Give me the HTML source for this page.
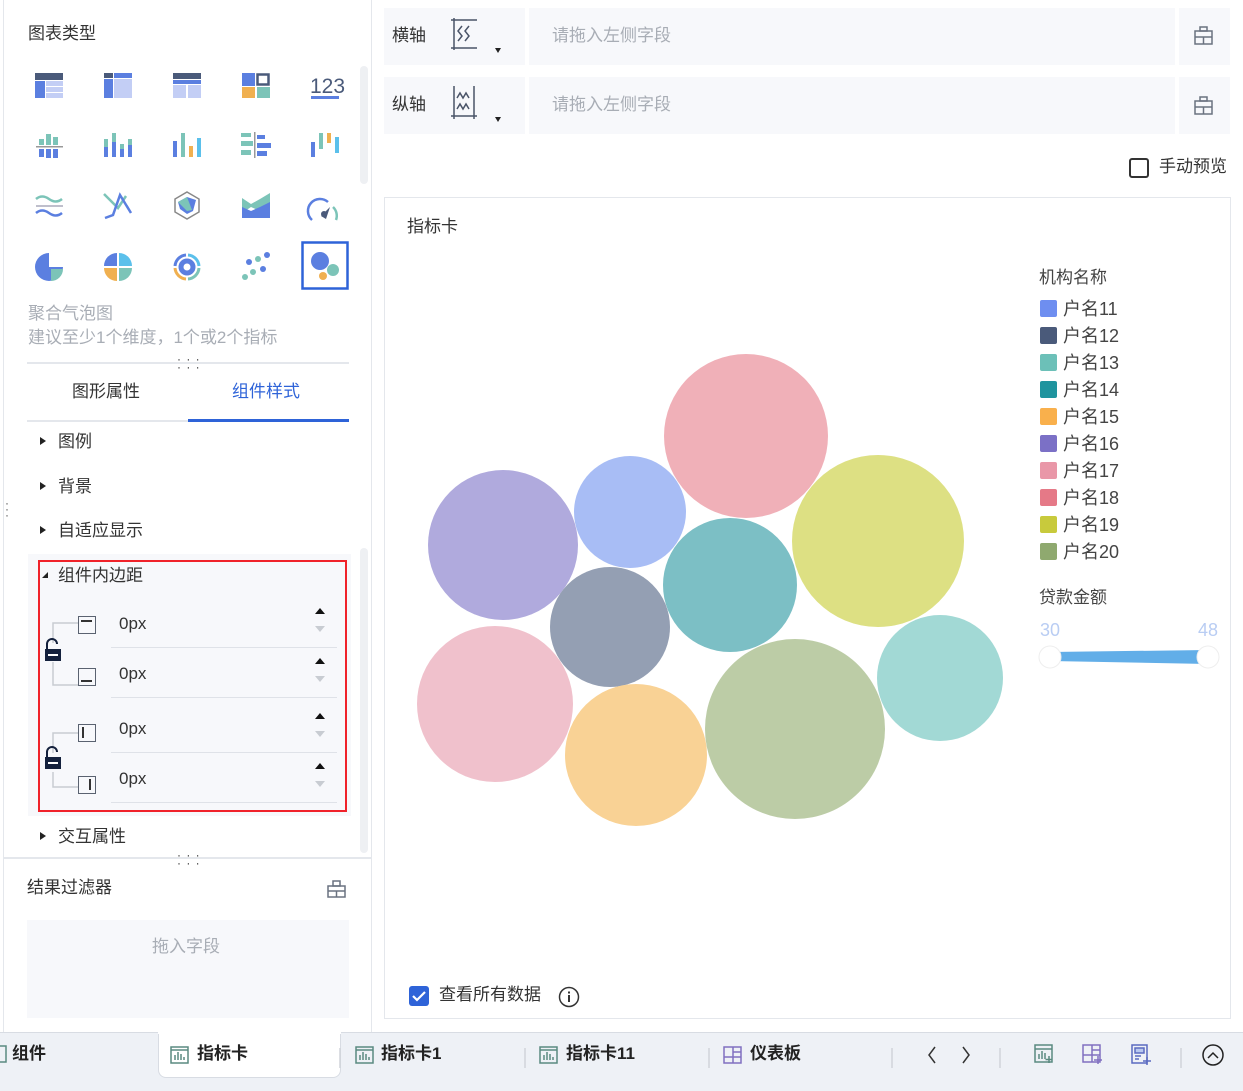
<!DOCTYPE html><html><head><meta charset="utf-8"><style>
*{margin:0;padding:0;box-sizing:border-box}
body{width:1243px;height:1091px;position:relative;background:#fff;font-family:"Liberation Sans","Noto Sans CJK SC",sans-serif;color:#333;overflow:hidden;font-size:17px;line-height:1.1}
.a{position:absolute}
.t{position:absolute;white-space:nowrap}
.gray{color:#a8adb5}
.sec{position:absolute;left:40px;font-size:17px;color:#333}
.sec:before{content:"";display:inline-block;border-left:6px solid #222;border-top:4px solid transparent;border-bottom:4px solid transparent;margin-right:12px;vertical-align:2px}
.leg{position:absolute;left:1040px;font-size:18px;color:#444}
.leg i{display:inline-block;width:17px;height:17px;vertical-align:-2px;margin-right:6px;border-radius:2px}
.inp{position:absolute;left:111px;width:226px;height:50px;border-bottom:1px solid #dfe2e8;font-size:17px;padding:17px 0 0 8px}
.up{position:absolute;right:12px;top:10px;border-bottom:6px solid #111;border-left:5px solid transparent;border-right:5px solid transparent}
.dn{position:absolute;right:12px;top:28px;border-top:6px solid #c8ccd2;border-left:5px solid transparent;border-right:5px solid transparent}
.pi{position:absolute;left:78px;width:18px;height:18px;border:1.5px solid #5a6270}
.tab{position:absolute;top:1045px;font-size:17px;font-weight:bold;color:#222}
</style></head><body>
<div class="a" style="left:3px;top:0;width:1px;height:1032px;background:#e4e7ec"></div>
<div class="a" style="left:371px;top:0;width:1px;height:1032px;background:#e4e7ec"></div>
<div class="a" style="left:360px;top:66px;width:8px;height:118px;background:#eef0f3;border-radius:4px"></div>
<div class="a" style="left:360px;top:548px;width:8px;height:305px;background:#eef0f3;border-radius:4px"></div>
<div class="t" style="left:28px;top:25px">图表类型</div>
<svg class="a" style="left:0;top:60px" width="360" height="240">
<g transform="translate(35,13)"><rect width="28" height="7" fill="#4a5a7a"/><rect y="8" width="10" height="17" fill="#5b7fe0"/><rect x="11" y="8" width="17" height="5" fill="#c3cef5"/><rect x="11" y="14" width="17" height="5" fill="#c3cef5"/><rect x="11" y="20" width="17" height="5" fill="#c3cef5"/></g>
<g transform="translate(104,13)"><rect width="9" height="5" fill="#4a5a7a"/><rect x="10" width="18" height="5" fill="#5b7fe0"/><rect y="6" width="9" height="19" fill="#5b7fe0"/><rect x="10" y="6" width="18" height="19" fill="#c3cef5"/></g>
<g transform="translate(173,13)"><rect width="28" height="6" fill="#4a5a7a"/><rect y="7" width="28" height="4" fill="#5b7fe0"/><rect y="12" width="13" height="13" fill="#c3cef5"/><rect x="15" y="12" width="13" height="13" fill="#c3cef5"/></g>
<g transform="translate(242,13)"><rect width="13" height="13" fill="#5b7fe0"/><rect x="15.5" y="1.5" width="11" height="10" fill="none" stroke="#4a5a7a" stroke-width="2.5"/><rect y="14" width="13" height="11" fill="#f0b050"/><rect x="15" y="14" width="13" height="11" fill="#7cc4b8"/></g>
<text x="310" y="33" font-size="21" fill="#4a5a7a" font-family="Liberation Sans">123</text><rect x="311" y="36" width="28" height="3" fill="#5b7fe0"/>
<g transform="translate(36,72)" ><rect x="3" y="7" width="5" height="6" fill="#7cc4b8"/><rect x="10" y="2" width="5" height="11" fill="#7cc4b8"/><rect x="17" y="5" width="5" height="8" fill="#7cc4b8"/><rect y="14" width="27" height="1.5" fill="#999"/><rect x="3" y="17" width="5" height="8" fill="#5b7fe0"/><rect x="10" y="17" width="5" height="9" fill="#5b7fe0"/><rect x="17" y="17" width="5" height="9" fill="#5b7fe0"/></g>
<g transform="translate(104,73)"><rect y="6" width="4" height="18" fill="#5b7fe0"/><rect y="6" width="4" height="8" fill="#7cc4b8"/><rect x="8" y="0" width="4" height="24" fill="#5b7fe0"/><rect x="8" width="4" height="9" fill="#7cc4b8"/><rect x="16" y="11" width="4" height="13" fill="#5b7fe0"/><rect x="16" y="11" width="4" height="5" fill="#7cc4b8"/><rect x="24" y="6" width="4" height="18" fill="#5b7fe0"/><rect x="24" y="6" width="4" height="6" fill="#7cc4b8"/></g>
<g transform="translate(173,73)"><rect y="8" width="4" height="16" fill="#5b7fe0"/><rect x="8" width="4" height="24" fill="#7cc4b8"/><rect x="16" y="13" width="4" height="11" fill="#f0b050"/><rect x="24" y="5" width="4" height="19" fill="#5bc0eb"/></g>
<g transform="translate(241,73)"><rect width="10" height="4" fill="#7cc4b8"/><rect y="8" width="12" height="5" fill="#7cc4b8"/><rect y="17" width="10" height="5" fill="#7cc4b8"/><rect x="13" y="-1" width="1.5" height="26" fill="#999"/><rect x="16" y="2" width="8" height="4" fill="#5b7fe0"/><rect x="16" y="10" width="14" height="5" fill="#5b7fe0"/><rect x="16" y="18" width="10" height="5" fill="#5b7fe0"/></g>
<g transform="translate(311,73)"><rect y="9" width="4" height="15" fill="#5b7fe0"/><rect x="8" width="4" height="16" fill="#7cc4b8"/><rect x="16" y="0" width="4" height="10" fill="#f0b050"/><rect x="24" y="4" width="4" height="16" fill="#5bc0eb"/></g>
<g fill="none" stroke-width="2.5"><path d="M36 139q6-5 13 0t13 0" stroke="#7cc4b8"/><path d="M36 146h27" stroke="#aab" stroke-width="1.5"/><path d="M36 153q6-5 13 0t13 0" stroke="#5b7fe0"/>
<path d="M104 134l14 14 8-12" stroke="#7cc4b8"/><path d="M105 158l8-3 7-20 11 18" stroke="#5b7fe0"/>
<path d="M187 132l12 7v13l-12 7-12-7v-13z" stroke="#888" stroke-width="1.5"/><path d="M178 142l9-5 9 3-3 11-6 3-7-5z" fill="#5b7fe0" stroke="none"/><path d="M178 142l9 9 5-1-5-13z" fill="#7cc4b8" stroke="none"/>
<path d="M312 160a12 12 0 0 1 16-18" stroke="#5b7fe0"/><path d="M333 147a12 12 0 0 1 3 13" stroke="#7cc4b8"/></g>
<path d="M242 138l9 6 9-5 10-6v10l-10 8-9-4-9 6z" fill="#7cc4b8"/><path d="M242 147l9 4 9-4 10-5v16h-28z" fill="#5b7fe0"/>
<path d="M321 156l9-9-4 12z" fill="#4a5a7a"/><circle cx="324" cy="154" r="3" fill="#4a5a7a"/>
<g transform="translate(35,193)"><path d="M14 0a14 14 0 1 0 14 14h-14z" fill="#5b7fe0"/><path d="M16 16h12a12 12 0 0 1-12 12z" fill="#7cc4b8"/></g>
<g transform="translate(104,193)"><path d="M13 0v13h-13a13 13 0 0 1 13-13z" fill="#5b7fe0"/><path d="M15 0a13 13 0 0 1 13 13h-13z" fill="#5bc0eb"/><path d="M0 15h13v13a13 13 0 0 1-13-13z" fill="#f0b050"/><path d="M15 15h13a13 13 0 0 1-13 13z" fill="#7cc4b8"/></g>
<g transform="translate(187,207)" fill="none" stroke-width="3"><path d="M-12 -1a12 12 0 0 1 11-11" stroke="#5b7fe0"/><path d="M1 -12a12 12 0 0 1 11 11" stroke="#5bc0eb"/><path d="M-12 1a12 12 0 0 0 11 11" stroke="#f0b050"/><path d="M1 12a12 12 0 0 0 11-11" stroke="#7cc4b8"/><circle r="6" stroke="#5b7fe0" stroke-width="5"/></g>
<circle cx="245" cy="217" r="3" fill="#7cc4b8"/><circle cx="253" cy="212" r="3" fill="#7cc4b8"/><circle cx="263" cy="209" r="3" fill="#5b7fe0"/><circle cx="249" cy="202" r="3" fill="#5b7fe0"/><circle cx="258" cy="199" r="3" fill="#7cc4b8"/><circle cx="267" cy="195" r="3" fill="#5b7fe0"/>
<rect x="302.5" y="182.5" width="45" height="46" fill="none" stroke="#2e63d8" stroke-width="2.5"/>
<circle cx="320" cy="201" r="9" fill="#5b7fe0"/><circle cx="333" cy="210" r="6" fill="#7cc4b8"/><circle cx="323" cy="216" r="4" fill="#f0b050"/>
</svg>
<div class="t gray" style="left:28px;top:305px">聚合气泡图</div>
<div class="t gray" style="left:28px;top:329px">建议至少1个维度，1个或2个指标</div>
<div class="a" style="left:27px;top:362px;width:322px;height:2px;background:#e4e7ec"></div>
<div class="t" style="left:177px;top:355px;font-size:12px;letter-spacing:1px;line-height:8px">· · ·<br>· · ·</div>
<div class="t" style="left:72px;top:383px">图形属性</div>
<div class="t" style="left:232px;top:383px;color:#2e63d8">组件样式</div>
<div class="a" style="left:27px;top:420px;width:161px;height:2px;background:#e4e7ec"></div>
<div class="a" style="left:188px;top:419px;width:161px;height:3px;background:#2e63d8"></div>
<div class="sec" style="top:433px">图例</div>
<div class="sec" style="top:478px">背景</div>
<div class="sec" style="top:522px">自适应显示</div>
<div class="t" style="left:5px;top:500px;font-size:12px;line-height:6px;color:#555">·<br>·<br>·</div>
<div class="a" style="left:28px;top:554px;width:323px;height:262px;background:#f7f8fb"></div>
<div class="a" style="left:38px;top:560px;width:309px;height:252px;border:2px solid #f0222a"></div>
<div class="t" style="left:42px;top:567px;font-size:17px"><span style="display:inline-block;border-bottom:6px solid #222;border-left:6px solid transparent;margin-right:10px;vertical-align:3px"></span>组件内边距</div>
<svg class="a" style="left:40px;top:600px" width="60" height="210" fill="none" stroke="#c8ccd2" stroke-width="1.5"><path d="M38 23H13v20M13 62v23h25"/><path d="M38 133H13v20M13 172v15h25"/><g fill="#14213d" stroke="none"><rect x="5" y="49" width="16" height="12"/><rect x="5" y="157" width="16" height="12"/></g><path d="M7 49v-5a5 5 0 0 1 10 0" stroke="#14213d" stroke-width="2"/><path d="M7 157v-5a5 5 0 0 1 10 0" stroke="#14213d" stroke-width="2"/><g stroke="#fff" stroke-width="2"><path d="M8 55h10M8 163h10"/></g></svg>
<div class="pi" style="top:616px"><div class="a" style="left:2px;top:3px;width:11px;height:1.5px;background:#333"></div></div>
<div class="pi" style="top:668px"><div class="a" style="left:2px;top:11px;width:11px;height:1.5px;background:#333"></div></div>
<div class="pi" style="top:724px"><div class="a" style="left:3px;top:2px;width:1.5px;height:11px;background:#333"></div></div>
<div class="pi" style="top:776px"><div class="a" style="left:10px;top:2px;width:1.5px;height:11px;background:#333"></div></div>
<div class="inp" style="top:598px">0px<div class="up"></div><div class="dn"></div></div>
<div class="inp" style="top:648px">0px<div class="up"></div><div class="dn"></div></div>
<div class="inp" style="top:703px">0px<div class="up"></div><div class="dn"></div></div>
<div class="inp" style="top:753px">0px<div class="up"></div><div class="dn"></div></div>
<div class="sec" style="top:828px">交互属性</div>
<div class="a" style="left:4px;top:857px;width:367px;height:2px;background:#e4e7ec"></div>
<div class="t" style="left:177px;top:851px;font-size:12px;letter-spacing:1px;line-height:8px">· · ·<br>· · ·</div>
<div class="t" style="left:27px;top:879px">结果过滤器</div>
<svg class="a" style="left:327px;top:879px" width="20" height="20" fill="none" stroke="#6a7280" stroke-width="1.5"><rect x="1" y="7" width="17" height="11"/><rect x="6" y="2" width="7" height="5"/><path d="M1 12h17M9.5 12v6"/></svg>
<div class="a" style="left:27px;top:920px;width:322px;height:98px;background:#f7f8fb"></div>
<div class="t gray" style="left:152px;top:938px">拖入字段</div>
<div class="a" style="left:384px;top:8px;width:141px;height:57px;background:#f7f8fb"></div>
<div class="a" style="left:529px;top:8px;width:646px;height:57px;background:#f7f8fb"></div>
<div class="a" style="left:1179px;top:8px;width:51px;height:57px;background:#f7f8fb"></div>
<div class="a" style="left:384px;top:77px;width:141px;height:57px;background:#f7f8fb"></div>
<div class="a" style="left:529px;top:77px;width:646px;height:57px;background:#f7f8fb"></div>
<div class="a" style="left:1179px;top:77px;width:51px;height:57px;background:#f7f8fb"></div>
<div class="t" style="left:392px;top:27px">横轴</div><div class="t" style="left:392px;top:96px">纵轴</div>
<div class="t gray" style="left:552px;top:27px">请拖入左侧字段</div><div class="t gray" style="left:552px;top:96px">请拖入左侧字段</div>
<svg class="a" style="left:448px;top:18px" width="60" height="120" fill="none" stroke="#4a5468" stroke-width="1.5"><path d="M3 2h26M3 30h26M6 0v32"/><path d="M14 8l-4 5 4 5-4 5M21 8l-4 5 4 5-4 5"/><path d="M3 98h26M6 68v33M26 68v33"/><path d="M9 80l3-5 3 5 3-5 3 5M9 91l3-5 3 5 3-5 3 5"/><path d="M47 30l3 5 3-5zM47 99l3 5 3-5z" fill="#222" stroke="none"/></svg>
<svg class="a" style="left:1194px;top:26px" width="20" height="90" fill="none" stroke="#6a7280" stroke-width="1.5"><rect x="1" y="5" width="17" height="13"/><rect x="6" y="1" width="7" height="4"/><path d="M1 11h17M9.5 11v7"/><g transform="translate(0,70)"><rect x="1" y="5" width="17" height="13"/><rect x="6" y="1" width="7" height="4"/><path d="M1 11h17M9.5 11v7"/></g></svg>
<div class="a" style="left:1129px;top:158px;width:20px;height:20px;border:2px solid #333;border-radius:3px"></div>
<div class="t" style="left:1159px;top:158px">手动预览</div>
<div class="a" style="left:384px;top:197px;width:847px;height:822px;border:1px solid #e4e7ec"></div>
<div class="t" style="left:407px;top:218px">指标卡</div>
<svg class="a" style="left:0;top:0" width="1243" height="1091">
<circle cx="746" cy="436" r="82" fill="#f0b0b8"/><circle cx="630" cy="512" r="56" fill="#a8bdf5"/><circle cx="503" cy="545" r="75" fill="#b0aadd"/><circle cx="878" cy="541" r="86" fill="#dde083"/><circle cx="730" cy="585" r="67" fill="#7cbfc5"/><circle cx="610" cy="627" r="60" fill="#949fb3"/><circle cx="495" cy="704" r="78" fill="#f0c1cc"/><circle cx="636" cy="755" r="71" fill="#f9d295"/><circle cx="795" cy="729" r="90" fill="#bccca6"/><circle cx="940" cy="678" r="63" fill="#a2d9d5"/>
<path d="M1050 652L1208 650v14L1050 661z" fill="#62aee8"/>
<circle cx="1050" cy="657" r="11" fill="#fff" stroke="#eee"/><circle cx="1208" cy="657" r="11" fill="#fff" stroke="#eee"/>
</svg>
<div class="t" style="left:1039px;top:269px;color:#444">机构名称</div>
<div class="leg" style="top:300px"><i style="background:#6e8ef0"></i>户名11</div>
<div class="leg" style="top:327px"><i style="background:#4a5a7a"></i>户名12</div>
<div class="leg" style="top:354px"><i style="background:#6cc0b8"></i>户名13</div>
<div class="leg" style="top:381px"><i style="background:#1f949e"></i>户名14</div>
<div class="leg" style="top:408px"><i style="background:#f9b04c"></i>户名15</div>
<div class="leg" style="top:435px"><i style="background:#7b70c6"></i>户名16</div>
<div class="leg" style="top:462px"><i style="background:#e997a8"></i>户名17</div>
<div class="leg" style="top:489px"><i style="background:#e57987"></i>户名18</div>
<div class="leg" style="top:516px"><i style="background:#c8ca3c"></i>户名19</div>
<div class="leg" style="top:543px"><i style="background:#8fa96f"></i>户名20</div>
<div class="t" style="left:1039px;top:589px;color:#444">贷款金额</div>
<div class="t" style="left:1040px;top:621px;color:#b9cdf3;font-size:18px">30</div>
<div class="t" style="left:1198px;top:621px;color:#b9cdf3;font-size:18px">48</div>
<div class="a" style="left:409px;top:986px;width:20px;height:20px;background:#2e63d8;border-radius:3px"></div>
<svg class="a" style="left:409px;top:986px" width="20" height="20"><path d="M4 10l4 4 8-8" fill="none" stroke="#fff" stroke-width="2.2"/></svg>
<div class="t" style="left:439px;top:986px">查看所有数据</div>
<svg class="a" style="left:558px;top:986px" width="22" height="22"><circle cx="11" cy="11" r="9.5" fill="none" stroke="#333" stroke-width="1.5"/><rect x="10" y="9" width="2" height="7" fill="#333"/><rect x="10" y="5.5" width="2" height="2" fill="#333"/></svg>
<div class="a" style="left:0;top:1032px;width:1243px;height:59px;background:#eef1f6;border-top:1.5px solid #d8dce3"></div>
<div class="a" style="left:158px;top:1030px;width:183px;height:48px;background:#fff;border:1.5px solid #d8dce3;border-top:none;border-radius:0 0 8px 8px"></div>
<div class="a" style="left:158px;top:1030px;width:183px;height:4px;background:#fff"></div>
<div class="tab" style="left:12px">组件</div>
<div class="tab" style="left:197px">指标卡</div>
<div class="tab" style="left:381px">指标卡1</div>
<div class="tab" style="left:566px">指标卡11</div>
<div class="tab" style="left:750px">仪表板</div>
<svg class="a" style="left:0;top:1040px" width="1243" height="40" fill="none" stroke-width="1.5">
<rect x="-6" y="6" width="12" height="16" stroke="#5a8a80"/>
<g stroke="#5a8a80"><rect x="171" y="7" width="17" height="16"/><path d="M171 10h17M175 20v-5M178 20v-8M181 20v-6M184 20v-3"/><rect x="356" y="7" width="17" height="16"/><path d="M356 10h17M360 20v-5M363 20v-8M366 20v-6M369 20v-3"/><rect x="540" y="7" width="17" height="16"/><path d="M540 10h17M544 20v-5M547 20v-8M550 20v-6M553 20v-3"/></g>
<g stroke="#8070c0"><rect x="724" y="7" width="17" height="16"/><path d="M733 7v16M724 17h17M733 12h8"/></g>
<path d="M340 8v20M525 8v20M709 8v20M892 8v20M1000 8v20M1181 8v20" stroke="#d0d4da"/>
<path d="M935 7l-6 8 6 8M963 7l6 8-6 8" stroke="#333"/>
<g stroke="#5a8a80"><rect x="1035" y="5" width="17" height="17"/><path d="M1035 9h17M1039 19v-5M1042 19v-8M1045 19v-6M1049 16v7M1045.5 19.5h7"/></g>
<g stroke="#8070c0"><rect x="1083" y="5" width="17" height="17"/><path d="M1092 5v17M1083 15h17M1092 10h8M1098 16v8M1094 20h8"/></g>
<g stroke="#5a6ac0"><rect x="1132" y="5" width="15" height="18"/><rect x="1135" y="8" width="9" height="5" fill="#b8c8f0"/><path d="M1135 16h6M1135 19h4M1147 17v8M1143 21h8"/></g>
<circle cx="1213" cy="15" r="10" stroke="#222"/><path d="M1208 18l5-5 5 5" stroke="#222"/>
</svg>
</body></html>
